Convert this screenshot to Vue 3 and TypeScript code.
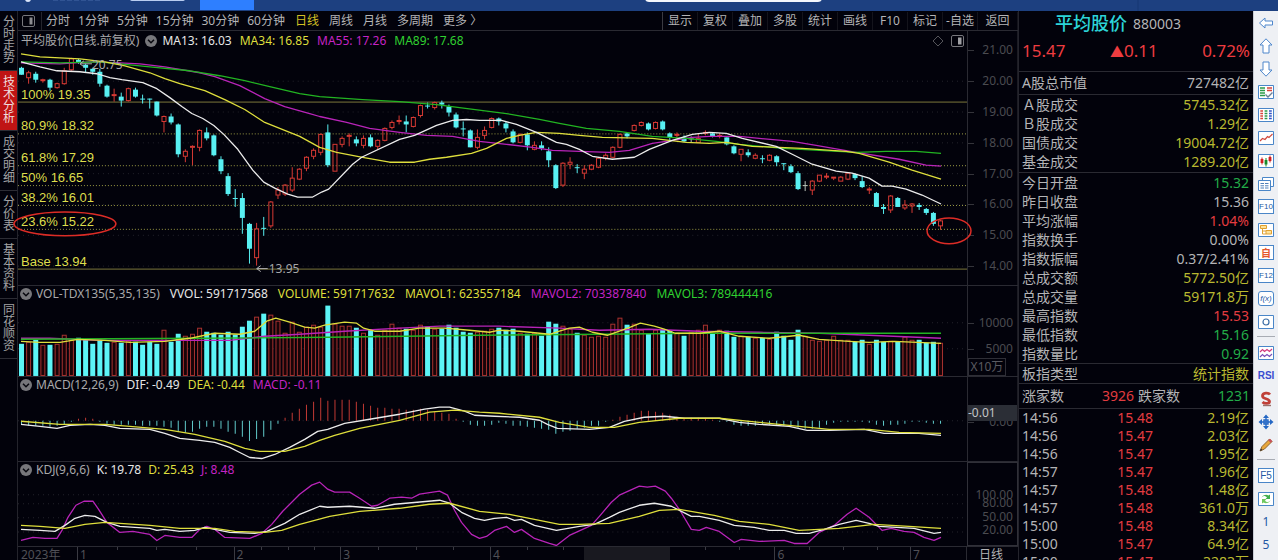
<script setup lang="ts">
type Candle = [kind: number, high: number, top: number, bottom: number, low: number]
interface Metric { text: string; tone: string }
interface Row { label: string; value: string; tone: string }
interface Shape { d: string; fill?: string; stroke?: string; width?: number }
interface Tool { name: string; shapes?: Shape[]; text?: string; boxed?: boolean; cls?: string; gap?: boolean }

const tabs = ['分时走势', '技术分析', '成交明细', '分价表', '基本资料', '同花顺资']
const activeTab = '技术分析'
const minutes = ['分时', '1分钟', '5分钟', '15分钟', '30分钟', '60分钟']
const periods = ['日线', '周线', '月线', '多周期', '更多 〉']
const actions = ['显示', '复权', '叠加', '多股', '统计', '画线', 'F10', '标记', '-自选', '返回']

/* Plot areas share one horizontal scale; each panel has its own vertical slice. */
const LEFT = 18
const WIDTH = 950
const STEP = 920 / 129
const barX = (i: number) => 21.5 + i * STEP
const pct = (value: number, start: number, size: number) => `${((value - start) / size) * 100}%`

/* kind: 0 falling, 1 rising, 2 unchanged */
const candles: Candle[] = [
  [0, 67, 68, 75, 75], [1, 71, 73, 78, 84], [0, 72, 74, 80, 83], [1, 79, 80, 81, 83], [0, 79, 80, 88, 91],
  [1, 83, 84, 88, 89], [1, 68, 71, 84, 85], [1, 58, 59, 70, 71], [0, 59, 60, 63, 64], [0, 64, 65, 68, 73],
  [0, 68, 69, 72, 75], [0, 69, 72, 84, 87], [0, 85, 86, 97, 98], [1, 89, 95, 96, 102], [0, 93, 97, 101, 107],
  [1, 88, 89, 101, 102], [0, 88, 90, 97, 98], [0, 95, 99, 100, 104], [0, 99, 99, 100, 109], [0, 102, 102, 116, 117],
  [1, 116, 117, 122, 133], [0, 114, 117, 123, 125], [0, 124, 125, 155, 158], [1, 150, 152, 157, 163], [1, 146, 147, 148, 166],
  [1, 130, 131, 148, 152], [0, 128, 133, 139, 141], [0, 135, 136, 156, 157], [0, 157, 160, 172, 175], [0, 174, 177, 195, 197],
  [0, 190, 199, 200, 208], [0, 194, 199, 219, 235], [0, 224, 225, 250, 265], [1, 224, 230, 259, 267], [0, 218, 229, 230, 237],
  [1, 202, 203, 227, 229], [1, 188, 191, 196, 200], [1, 185, 186, 195, 197], [1, 168, 179, 191, 193], [1, 169, 170, 180, 181],
  [1, 157, 158, 169, 172], [1, 149, 151, 157, 160], [1, 134, 135, 153, 156], [0, 125, 133, 166, 168], [1, 145, 145, 172, 172],
  [1, 137, 139, 145, 148], [1, 134, 136, 137, 147], [0, 137, 140, 144, 147], [1, 136, 139, 146, 149], [0, 135, 138, 147, 148],
  [1, 140, 141, 147, 150], [1, 128, 129, 141, 142], [1, 121, 123, 128, 130], [1, 116, 121, 122, 125], [0, 116, 122, 125, 133],
  [1, 117, 118, 127, 128], [1, 105, 106, 116, 118], [0, 103, 106, 107, 109], [1, 102, 103, 108, 110], [0, 101, 103, 105, 109],
  [0, 105, 107, 113, 117], [0, 113, 115, 128, 129], [0, 122, 129, 130, 137], [0, 130, 131, 148, 148], [1, 130, 138, 148, 150],
  [1, 127, 131, 136, 140], [1, 118, 119, 128, 129], [0, 118, 119, 122, 126], [0, 122, 124, 129, 133], [0, 130, 132, 143, 144],
  [1, 134, 135, 143, 144], [0, 133, 135, 146, 151], [1, 142, 146, 150, 151], [0, 142, 146, 149, 151], [0, 148, 152, 161, 168],
  [0, 165, 166, 189, 190], [1, 163, 164, 186, 188], [1, 158, 163, 165, 170], [0, 165, 168, 169, 174], [1, 166, 170, 174, 180],
  [1, 165, 166, 170, 171], [1, 158, 159, 168, 169], [1, 154, 156, 159, 161], [1, 147, 148, 158, 159], [1, 134, 135, 148, 149],
  [0, 133, 134, 137, 139], [1, 125, 126, 131, 132], [1, 122, 123, 126, 127], [0, 123, 124, 130, 131], [1, 122, 123, 129, 130],
  [0, 121, 122, 130, 131], [0, 133, 134, 138, 141], [1, 133, 135, 136, 139], [0, 136, 138, 142, 143], [2, 137, 139, 140, 143],
  [1, 134, 139, 143, 143], [1, 131, 133, 134, 136], [0, 133, 134, 137, 138], [1, 134, 136, 137, 139], [0, 138, 138, 145, 146],
  [0, 146, 147, 154, 155], [1, 150, 150, 155, 162], [0, 150, 153, 156, 158], [1, 154, 156, 159, 160], [0, 156, 159, 160, 164],
  [1, 155, 156, 161, 162], [0, 156, 157, 163, 167], [0, 164, 164, 165, 171], [0, 165, 167, 173, 174], [0, 172, 174, 190, 191],
  [2, 182, 186, 187, 192], [1, 181, 182, 191, 196], [1, 176, 176, 182, 183], [1, 174, 177, 178, 180], [1, 178, 178, 179, 181],
  [1, 177, 178, 182, 182], [1, 173, 174, 180, 181], [0, 174, 175, 179, 181], [0, 177, 182, 188, 189], [1, 188, 190, 191, 195],
  [0, 193, 194, 208, 208], [0, 205, 208, 210, 215], [1, 196, 197, 211, 214], [0, 198, 199, 208, 208], [1, 201, 206, 209, 211],
  [1, 204, 205, 207, 214], [0, 204, 206, 208, 211], [0, 209, 210, 214, 216], [0, 213, 214, 225, 227], [1, 221, 222, 227, 231],
]

const volumeTops = [
  345, 343, 341, 346, 346, 345, 336, 341, 339, 341, 345, 341, 344, 343, 344, 342, 343, 346, 343, 345,
  331, 343, 335, 337, 335, 329, 333, 334, 336, 333, 336, 328, 322, 318, 315, 316, 322, 334, 323, 333,
  328, 326, 328, 307, 325, 327, 327, 329, 334, 331, 336, 331, 325, 329, 330, 331, 326, 328, 330, 330,
  326, 329, 333, 334, 333, 332, 330, 329, 331, 330, 334, 335, 334, 337, 323, 325, 327, 330, 334, 336,
  338, 337, 338, 325, 319, 326, 325, 331, 335, 331, 331, 332, 334, 337, 333, 331, 326, 335, 331, 332,
  338, 337, 338, 339, 339, 340, 333, 337, 341, 331, 337, 341, 342, 341, 337, 341, 341, 343, 341, 345,
  341, 343, 342, 343, 338, 341, 341, 344, 343, 344,
]

const histogram = [
  -4, -5, -5, -5, -6, -5, -4, 0, 2, 3, 2, 0, -3, -4, -4, -4, -4, -5, -5, -5,
  -6, -7, -11, -12, -11, -8, -6, -6, -8, -11, -13, -16, -20, -18, -16, -9, -3, 3, 8, 12,
  16, 19, 23, 20, 21, 21, 21, 19, 17, 15, 13, 13, 12, 12, 11, 11, 12, 11, 9, 8,
  7, 2, 0, -4, -5, -5, -4, -2, -3, -5, -5, -6, -7, -8, -9, -13, -11, -10, -8, -7,
  -5, -5, -1, 1, 4, 6, 8, 10, 10, 9, 8, 6, 4, 3, 3, 3, 2, 1, 0, -1,
  -4, -5, -5, -5, -4, -4, -5, -5, -6, -7, -8, -8, -7, -4, -2, -1, 0, 0, -1, -2,
  -4, -5, -4, -4, -3, -1, -1, -2, -3, -3,
]

const priceLines = [
  { tone: 'violet', points: '21,63 60,64 90,62 120,63 140,64 165,67 200,73 215,77 240,86 265,99 285,107 310,114 320,117 347,123 370,129 400,133 427,136 453,137 480,142 507,145 533,148 553,151 580,152 610,153 630,151 653,144 680,140 693,138 710,137 740,137 760,139 793,142 817,146 857,153 900,160 927,166 942,167' },
  { tone: 'lime', points: '21,62 60,63 100,62 150,67 190,71 220,76 245,81 270,87 300,94 320,97 363,100 400,102 437,105 460,108 507,114 540,120 560,124 587,129 620,132 653,137 687,139 717,142 740,145 783,149 820,151 857,153 887,152 917,152 942,154' },
  { tone: 'gold', points: '21,54 40,57 60,58 80,59 105,62 125,66 150,73 165,79 180,84 205,91 225,100 245,110 265,123 285,131 300,137 320,148 337,153 363,158 390,163 415,163 430,160 447,158 472,154 487,149 507,139 520,136 537,133 560,134 580,136 603,138 653,139 687,143 710,144 727,143 753,147 780,148 803,149 847,152 860,154 890,163 913,171 942,180' },
  { tone: 'white', points: '21,62 40,67 57,71 80,72 97,74 110,78 122,80 143,83 157,89 170,98 182,107 192,114 203,119 214,126 224,135 238,150 253,171 264,183 275,189 288,195 298,198 313,198 322,193 329,190 353,165 362,158 400,140 415,136 437,126 453,121 467,120 480,121 502,121 517,125 537,133 557,143 567,145 580,150 593,157 613,160 635,158 650,150 673,141 693,135 710,133 727,134 743,139 777,147 793,155 813,165 837,172 853,174 870,179 883,187 893,187 907,190 923,196 942,205' },
]
const volumeLines = [
  { tone: 'violet', points: '21,339 50,339 100,341 180,341 230,341 265,337 300,335 345,332 400,329 440,327 500,327 560,329 600,331 650,330 700,332 760,333 820,334 870,336 942,339' },
  { tone: 'lime', points: '21,340 200,339 330,338 480,336 600,335 700,334 942,334' },
  { tone: 'gold', points: '21,342 40,343 60,343 78,340 105,341 130,343 165,342 190,339 205,336 215,334 240,335 255,332 267,322 276,319 290,323 305,328 315,329 325,326 345,323 357,324 364,329 375,332 400,332 420,329 445,329 470,331 490,333 500,331 520,332 550,335 560,332 570,329 580,328 593,333 608,336 620,332 631,328 641,324 655,327 665,330 676,334 700,334 720,332 740,337 770,339 800,336 820,340 850,342 870,343 895,342 942,344' },
]
const macdLines = [
  { tone: 'white', points: '21,425 40,427 57,429 70,426 90,425 105,426 120,429 150,430 165,434 180,439 200,441 215,443 230,448 240,453 250,458 262,459 275,455 290,448 305,440 318,432 328,430 345,424 370,420 400,415 425,410 440,408 450,408 465,412 475,416 495,417 520,418 540,421 548,425 558,429 590,430 610,428 625,422 645,418 665,417 685,419 720,419 740,423 760,425 790,427 808,431 830,431 865,430 885,434 920,434 942,436' },
  { tone: 'gold', points: '21,422 60,425 105,425 130,427 165,430 195,435 225,442 245,449 260,452 285,452 305,447 320,441 335,436 360,429 400,421 430,413 455,411 480,413 500,414 540,418 560,423 590,428 615,428 640,423 680,419 720,419 760,423 800,427 830,430 870,430 900,433 942,434' },
]
const kdjLines = [
  { tone: 'violet', points: '21,540 33,537 45,538 57,538 62,530 68,517 76,505 84,501 93,501 98,508 107,522 120,532 133,531 150,534 157,540 165,535 180,537 192,537 200,529 207,526 215,529 225,537 250,538 262,533 272,524 283,511 300,494 312,485 320,482 328,489 335,492 350,492 360,498 372,506 378,505 390,498 402,497 412,498 420,494 440,491 448,495 455,510 462,522 472,534 480,538 487,536 495,530 507,526 515,532 522,529 535,538 550,543 557,545 570,535 592,525 600,516 612,502 620,495 640,486 648,487 656,486 666,491 672,498 680,509 692,529 700,530 707,527 720,531 735,542 742,539 760,541 785,540 795,543 808,543 820,532 835,525 848,514 857,508 870,517 883,530 892,528 905,531 915,532 925,537 935,540 942,537' },
  { tone: 'white', points: '21,529 40,530 55,531 65,525 75,518 85,515 95,516 107,522 120,526 150,528 157,530 165,529 180,531 195,530 205,527 215,529 230,532 255,533 267,531 285,523 300,514 320,506 328,507 350,506 375,508 395,504 440,500 450,503 462,512 475,518 485,520 495,518 507,517 515,520 522,519 535,525 557,530 580,526 595,524 610,517 620,512 640,505 655,503 672,506 692,516 700,516 720,520 735,525 755,527 770,530 785,530 797,533 810,533 825,529 840,524 857,520 870,523 880,526 915,528 935,533 942,532' },
  { tone: 'gold', points: '21,525 40,526 65,528 85,524 105,522 120,523 150,525 180,528 215,528 235,531 265,532 282,530 300,524 330,516 360,511 400,508 430,504 450,503 480,511 510,514 540,520 560,524 580,524 610,523 640,516 660,510 680,509 715,515 740,521 770,524 800,530 840,528 875,524 910,526 942,528' },
]

const priceMetrics: Metric[] = [
  { text: 'MA13: 16.03', tone: 'white' }, { text: 'MA34: 16.85', tone: 'gold' },
  { text: 'MA55: 17.26', tone: 'violet' }, { text: 'MA89: 17.68', tone: 'lime' },
]
const volumeMetrics: Metric[] = [
  { text: 'VVOL: 591717568', tone: 'white' }, { text: 'VOLUME: 591717632', tone: 'gold' },
  { text: 'MAVOL1: 623557184', tone: 'gold' }, { text: 'MAVOL2: 703387840', tone: 'violet' },
  { text: 'MAVOL3: 789444416', tone: 'lime' },
]
const macdMetrics: Metric[] = [
  { text: 'DIF: -0.49', tone: 'white' }, { text: 'DEA: -0.44', tone: 'gold' }, { text: 'MACD: -0.11', tone: 'violet' },
]
const kdjMetrics: Metric[] = [
  { text: 'K: 19.78', tone: 'white' }, { text: 'D: 25.43', tone: 'gold' }, { text: 'J: 8.48', tone: 'violet' },
]

const levels = [
  { label: '100% 19.35', y: 102, solid: true }, { label: '80.9% 18.32', y: 134, solid: false },
  { label: '61.8% 17.29', y: 166, solid: false }, { label: '50% 16.65', y: 186, solid: false },
  { label: '38.2% 16.01', y: 206, solid: false }, { label: '23.6% 15.22', y: 230, solid: false },
  { label: 'Base 13.94', y: 270, solid: true },
]
const priceTicks = [21, 20, 19, 18, 17, 16, 15, 14]
const priceY = (p: number) => 50 + (21 - p) * 31
const volumeTicks = [{ label: '10000', y: 323 }, { label: '5000', y: 349 }]
const kdjTicks = [{ label: '100.00', y: 494 }, { label: '80.00', y: 503 }, { label: '50.00', y: 517 }, { label: '20.00', y: 531 }]
const months = [{ label: '1', x: 77 }, { label: '2', x: 234 }, { label: '3', x: 341 }, { label: '4', x: 491 }, { label: '6', x: 776 }, { label: '7', x: 912 }]
const minorTicks = [117, 156, 196, 262, 289, 315, 379, 417, 454, 528, 564, 706, 741, 811, 845, 879]

const turnover: Row[] = [
  { label: 'Ａ股成交', value: '5745.32亿', tone: 'amber' }, { label: 'Ｂ股成交', value: '1.29亿', tone: 'amber' },
  { label: '国债成交', value: '19004.72亿', tone: 'amber' }, { label: '基金成交', value: '1289.20亿', tone: 'amber' },
]
const stats: Row[] = [
  { label: '今日开盘', value: '15.32', tone: 'down' }, { label: '昨日收盘', value: '15.36', tone: 'plain' },
  { label: '平均涨幅', value: '1.04%', tone: 'up' }, { label: '指数换手', value: '0.00%', tone: 'plain' },
  { label: '指数振幅', value: '0.37/2.41%', tone: 'plain' }, { label: '总成交额', value: '5772.50亿', tone: 'amber' },
  { label: '总成交量', value: '59171.8万', tone: 'amber' }, { label: '最高指数', value: '15.53', tone: 'up' },
  { label: '最低指数', value: '15.16', tone: 'down' }, { label: '指数量比', value: '0.92', tone: 'down' },
]
const ticks = [
  ['14:56', '15.48', '2.19亿'], ['14:56', '15.47', '2.03亿'], ['14:56', '15.47', '1.95亿'],
  ['14:57', '15.47', '1.96亿'], ['14:57', '15.48', '1.48亿'], ['14:57', '15.48', '361.0万'],
  ['15:00', '15.48', '8.34亿'], ['15:00', '15.47', '64.9亿'], ['15:00', '15.47', '3283万'],
]

const FRAME: Shape = { d: 'M.5 1.5h15v13H.5z', fill: '#fff', stroke: '#4a86c8' }
const tools: Tool[] = [
  { name: '后退', shapes: [{ d: 'M1.5 8 7 3v3h7.500v4H7v3z', fill: '#fff', stroke: '#4f87cc' }] },
  { name: '上移', shapes: [{ d: 'M8 .8 14 7h-3v8H5V7H2z', fill: '#fff', stroke: '#4f87cc' }] },
  { name: '下移', shapes: [{ d: 'M8 15.200 14 9h-3V1H5v8H2z', fill: '#fff', stroke: '#4f87cc' }] },
  { name: '报价', shapes: [FRAME, { d: 'M2 4h5M2 6.500h5M2 9h5M2 11.500h5', stroke: '#2c9a4a', width: 1.5 }, { d: 'M9 4h5M9 6.500h5', stroke: '#d8453c', width: 1.5 }, { d: 'M7.500 10.500 10 13 14.500 8.500', fill: 'none', stroke: '#6c7f96', width: 1.4 }] },
  { name: '列表', shapes: [FRAME, { d: 'M2.300 4H5M2.300 6.500H5M2.300 9H5M2.300 11.500H5', stroke: '#d8453c', width: 1.5 }, { d: 'M6.600 4h2.800M6.600 6.500h2.800M6.600 9h2.800M6.600 11.500h2.800', stroke: '#2c9a4a', width: 1.5 }, { d: 'M11 4h2.800M11 6.500h2.800M11 9h2.800M11 11.500h2.800', stroke: '#3355c8', width: 1.5 }] },
  { name: '走势', shapes: [FRAME, { d: 'M2 11 4.500 8.500 7 9.500 9.500 6.500 11 7.500 14.500 4', fill: 'none', stroke: '#d2483c', width: 1.2 }] },
  { name: 'K线', shapes: [FRAME, { d: 'M4 4.500v7M12 2.500v7', stroke: '#d02020' }, { d: 'M2.600 6h2.800v4H2.600zM10.600 4h2.800v4h-2.800z', fill: '#d02020' }, { d: 'M8 5v8.500', stroke: '#188a28' }, { d: 'M6.600 7h2.800v4.500H6.600z', fill: '#188a28' }] },
  { name: '资讯', shapes: [{ d: 'M4.500 1.500h11v9h-11z', fill: '#fff', stroke: '#4a86c8' }, { d: 'M.5 4.500h12v10H.5z', fill: '#fff', stroke: '#4a86c8' }, { d: 'M2.500 7.500h3.500M7 7.500h3.500M2.500 9.800h3.500M7 9.800h3.500M2.500 12h3.500M7 12h3.500', stroke: '#4f7fb8' }] },
  { name: 'F10', text: 'F10', boxed: true },
  { name: '板块', shapes: [FRAME, { d: 'M2.500 3.500h6v3h-6zM8 8.500h5.500v3.500H8z', fill: '#fde29a', stroke: '#e0a030' }, { d: 'M4.500 6.500V12H8M4.500 9H8', fill: 'none', stroke: '#e0a030' }] },
  { name: '自选', text: '自', boxed: true, cls: 'orange' },
  { name: 'F12', text: 'F12', boxed: true },
  { name: '公式', text: 'f(x)', boxed: true, cls: 'formula' },
  { name: '圆', shapes: [FRAME, { d: 'M8 5a3 3 0 1 1 0 6a3 3 0 1 1 0-6z', fill: 'none', stroke: '#3c6ea6', width: 1.2 }] },
  { name: '叠加', gap: true, shapes: [FRAME, { d: 'M2 7 4.500 4.500 6.500 6.500 9 4.500 11.500 6.500 14 4', fill: 'none', stroke: '#d2387c', width: 1.2 }, { d: 'M2 12 4.500 9.500 6.500 11.500 9 9.500 11.500 11.500 14 9', fill: 'none', stroke: '#7a50b8', width: 1.2 }] },
  { name: 'RSI', text: 'RSI', cls: 'rsi' },
  { name: '资金', shapes: [{ d: 'M12 3.500C10.500 1.500 4.500 1.500 4.500 5c0 3.500 7 2 7 5.500 0 2.500-5 2.500-7 .5', fill: 'none', stroke: '#c04038', width: 2.800 }, { d: 'M5 14.500h8', stroke: '#99706c', width: 1.400 }] },
  { name: '移动', shapes: [{ d: 'M8 .5 11 4H5zM8 15.500 5 12h6zM.5 8 4 5v6zM15.500 8 12 11V5z', fill: '#2467c4' }, { d: 'M6 6h4v4H6zM8 4v8M4 8h8', fill: '#fff', stroke: '#2467c4', width: 1.4 }] },
  { name: '画笔', shapes: [{ d: 'M2 14 4 9.500 11.500 2 14 4.500 6.500 12z', fill: '#e8a63a', stroke: '#8d6430' }, { d: 'M11 2.500 13.500 5', stroke: '#c8505c', width: 2.400 }, { d: 'M2 14l1-2.500L4.500 13z', fill: '#333' }] },
  { name: 'F5', gap: true, text: 'F5', boxed: true, cls: 'wide' },
  { name: '刷新', shapes: [FRAME, { d: 'M3.500 7a4.500 3.500 0 0 1 7-2.500L12 3.500V8H7.500L9 6.500A3 3 0 0 0 3.500 7z', fill: '#3fae4c' }, { d: 'M12.500 9a4.500 3.500 0 0 1-7 2.500L4 12.500V8h4.500L7 9.500A3 3 0 0 0 12.500 9z', fill: '#6fc860' }] },
  { name: '1分钟', text: '1' },
  { name: '5分钟', text: '5' },
]
</script>

<template>
  <div class="app">
    <header class="topbar">
      <svg viewBox="0 0 1278 11" preserveAspectRatio="none" aria-hidden="true">
        <rect x="200" y="0" width="54" height="10" fill="#2e7fff" />
        <rect x="130" y="-4" width="55" height="5" rx="2" fill="#b9cdf0" />
        <circle cx="28" cy="-1" r="3" fill="#dbe6fa" />
        <path d="M53 0h48" stroke="#4769a8" stroke-dasharray="5 2" />
        <rect x="645" y="-6" width="177" height="8" rx="4" fill="#f4f7fc" />
        <path d="M1138 0v11" stroke="#173672" />
      </svg>
    </header>

    <div class="body">
      <nav class="tabs">
        <button v-for="t in tabs" :key="t" type="button" :class="{ active: t === activeTab }">{{ t }}</button>
      </nav>

      <main class="chart">
        <div class="toolbar">
          <button type="button" class="layout" aria-label="布局">
            <svg width="13" height="12" viewBox="0 0 13 12"><rect x=".5" y=".5" width="12" height="11" rx="1.500" fill="none" stroke="#77777c" /><path d="M7.500 2.500h3v7h-3z" fill="#8c8c90" /></svg>
          </button>
          <div class="group minutes"><button v-for="m in minutes" :key="m" type="button">{{ m }}</button></div>
          <div class="group periods"><button v-for="p in periods" :key="p" type="button" :class="{ current: p === '日线' }">{{ p }}</button></div>
          <div class="actions"><button v-for="a in actions" :key="a" type="button">{{ a }}</button></div>
        </div>

        <section class="panel price">
          <div class="plot">
            <svg class="canvas" viewBox="18 31 950 255" preserveAspectRatio="none">
              <line v-for="p in priceTicks.slice(1)" :key="p" class="grid" x1="18" x2="968" :y1="priceY(p) + 0.5" :y2="priceY(p) + 0.5" />
              <line v-for="l in levels" :key="l.label" :class="['level', { solid: l.solid }]" x1="18" x2="968" :y1="l.y + 0.5" :y2="l.y + 0.5" />
              <g v-for="(c, i) in candles" :key="i" :class="['candle', ['fall', 'rise', 'flat'][c[0]]]">
                <template v-if="c[0] === 1">
                  <path :d="`M${barX(i)} ${c[1]}V${c[2]}M${barX(i)} ${c[3]}V${c[4]}`" />
                  <rect :x="barX(i) - 2" :y="c[2]" width="4" :height="c[3] - c[2]" />
                </template>
                <template v-else>
                  <path :d="`M${barX(i)} ${c[1]}V${c[4]}`" />
                  <rect :x="barX(i) - 2.5" :y="c[2]" width="5" :height="c[3] - c[2]" />
                </template>
              </g>
              <polyline v-for="l in priceLines" :key="l.tone" :class="['curve', l.tone]" :points="l.points" />
              <path class="pointer" d="M80 64h12M80 64l4-3M80 64l4 3M257 270h11M257 270l4-3M257 270l4 3" />
            </svg>
            <div class="head tall">
              <span class="name">平均股价(日线.前复权)</span>
              <button type="button" class="fold" aria-label="展开"><svg width="12" height="12" viewBox="0 0 12 12"><circle cx="6" cy="6" r="6" fill="#77777b" /><path d="M3 4.800 6 7.800 9 4.800" fill="none" stroke="#08080f" stroke-width="1.500" /></svg></button>
              <span v-for="m in priceMetrics" :key="m.text" :class="m.tone">{{ m.text }}</span>
              <span class="corner">
                <svg width="12" height="12" viewBox="0 0 12 12"><path d="M6 1 11 6 6 11 1 6z" fill="none" stroke="#55555a" /></svg>
                <svg width="13" height="12" viewBox="0 0 13 12"><rect x=".5" y=".5" width="12" height="11" rx="1.500" fill="none" stroke="#77777c" /><path d="M7 2.500h3.500v7H7z" fill="#a0a0a4" /></svg>
              </span>
            </div>
            <span v-for="l in levels" :key="l.label" class="level-label" :style="{ top: pct(l.y - 7, 31, 255) }">{{ l.label }}</span>
            <span class="extreme" :style="{ left: pct(92, LEFT, WIDTH), top: pct(65, 31, 255) }">20.75</span>
            <span class="extreme" :style="{ left: pct(269, LEFT, WIDTH), top: pct(270, 31, 255) }">13.95</span>
            <svg class="canvas marks" viewBox="18 31 950 255" preserveAspectRatio="none">
              <ellipse cx="65" cy="225" rx="51" ry="12" /><ellipse cx="950" cy="232" rx="22" ry="13" />
            </svg>
          </div>
          <div class="axis">
            <span v-for="p in priceTicks" :key="p" class="tick" :style="{ top: pct(priceY(p) + 0.5, 31, 255) }">{{ p.toFixed(2) }}</span>
          </div>
        </section>

        <section class="panel volume">
          <div class="plot">
            <svg class="canvas" viewBox="18 286 950 91" preserveAspectRatio="none">
              <line v-for="t in volumeTicks" :key="t.y" class="grid" x1="18" x2="968" :y1="t.y + 0.5" :y2="t.y + 0.5" />
              <g v-for="(v, i) in volumeTops" :key="i">
                <rect v-if="candles[i][0] === 0" class="vol-fall" :x="barX(i) - 2.5" :y="v - 0.5" width="5" :height="377 - v" />
                <rect v-else class="vol-rise" :x="barX(i) - 2" :y="v" width="4" :height="376 - v" />
              </g>
              <polyline v-for="l in volumeLines" :key="l.tone" :class="['curve', l.tone]" :points="l.points" />
            </svg>
            <div class="head">
              <button type="button" class="fold" aria-label="展开"><svg width="12" height="12" viewBox="0 0 12 12"><circle cx="6" cy="6" r="6" fill="#77777b" /><path d="M3 4.800 6 7.800 9 4.800" fill="none" stroke="#08080f" stroke-width="1.500" /></svg></button>
              <span class="name">VOL-TDX135(5,35,135)</span>
              <span v-for="m in volumeMetrics" :key="m.text" :class="m.tone">{{ m.text }}</span>
            </div>
          </div>
          <div class="axis">
            <span v-for="t in volumeTicks" :key="t.y" class="tick" :style="{ top: pct(t.y + 0.5, 286, 91) }">{{ t.label }}</span>
            <span class="unit">X10万</span>
          </div>
        </section>

        <section class="panel macd">
          <div class="plot">
            <svg class="canvas" viewBox="18 377 950 84" preserveAspectRatio="none">
              <line class="grid" x1="18" x2="968" y1="421.5" y2="421.5" />
              <path v-for="(h, i) in histogram" :key="i" :class="h > 0 ? 'hist-up' : 'hist-down'" :d="`M${barX(i)} 421.5v${h === 0 ? 1 : -h}`" />
              <polyline v-for="l in macdLines" :key="l.tone" :class="['curve', l.tone]" :points="l.points" />
            </svg>
            <div class="head">
              <button type="button" class="fold" aria-label="展开"><svg width="12" height="12" viewBox="0 0 12 12"><circle cx="6" cy="6" r="6" fill="#77777b" /><path d="M3 4.800 6 7.800 9 4.800" fill="none" stroke="#08080f" stroke-width="1.500" /></svg></button>
              <span class="name">MACD(12,26,9)</span>
              <span v-for="m in macdMetrics" :key="m.text" :class="m.tone">{{ m.text }}</span>
            </div>
          </div>
          <div class="axis">
            <span class="tick" :style="{ top: pct(422, 377, 84) }">0.00</span>
            <span class="badge" :style="{ top: pct(413, 377, 84) }">-0.01</span>
          </div>
        </section>

        <section class="panel kdj">
          <div class="plot">
            <svg class="canvas" viewBox="18 461 950 85" preserveAspectRatio="none">
              <line v-for="t in kdjTicks" :key="t.y" class="grid" x1="18" x2="968" :y1="t.y + 0.5" :y2="t.y + 0.5" />
              <polyline v-for="l in kdjLines" :key="l.tone" :class="['curve', l.tone]" :points="l.points" />
            </svg>
            <div class="head">
              <button type="button" class="fold" aria-label="展开"><svg width="12" height="12" viewBox="0 0 12 12"><circle cx="6" cy="6" r="6" fill="#77777b" /><path d="M3 4.800 6 7.800 9 4.800" fill="none" stroke="#08080f" stroke-width="1.500" /></svg></button>
              <span class="name">KDJ(9,6,6)</span>
              <span v-for="m in kdjMetrics" :key="m.text" :class="m.tone">{{ m.text }}</span>
            </div>
          </div>
          <div class="axis framed">
            <span v-for="t in kdjTicks" :key="t.y" class="tick bare" :style="{ top: pct(t.y, 461, 85) }">{{ t.label }}</span>
          </div>
        </section>

        <footer class="dates">
          <div class="timeline">
            <span class="year">2023年</span>
            <span v-for="m in months" :key="m.label" class="month" :style="{ left: pct(m.x, LEFT, WIDTH) }">{{ m.label }}</span>
            <i v-for="x in minorTicks" :key="x" class="minor" :style="{ left: pct(x, LEFT, WIDTH) }"></i>
            <i class="handle" :style="{ left: pct(585, LEFT, WIDTH), width: pct(86, 0, WIDTH) }"></i>
          </div>
          <span class="mode">日线</span>
        </footer>
      </main>

      <aside class="quote">
        <h1><span class="title">平均股价</span><span class="code">880003</span></h1>
        <div class="last"><span>15.47</span><span><i class="arrow">▲</i>0.11</span><span>0.72%</span></div>
        <table class="cap"><tbody><tr><th scope="row">A股总市值</th><td>727482亿</td></tr></tbody></table>
        <table class="turnover"><tbody><tr v-for="r in turnover" :key="r.label"><th scope="row">{{ r.label }}</th><td :class="r.tone">{{ r.value }}</td></tr></tbody></table>
        <table class="stats"><tbody><tr v-for="r in stats" :key="r.label"><th scope="row">{{ r.label }}</th><td :class="r.tone">{{ r.value }}</td></tr></tbody></table>
        <table class="kind"><tbody><tr><th scope="row">板指类型</th><td class="amber">统计指数</td></tr></tbody></table>
        <div class="breadth"><span>涨家数</span><span class="up">3926</span><span>跌家数</span><span class="down">1231</span></div>
        <table class="ticks"><tbody><tr v-for="(t, i) in ticks" :key="i"><td>{{ t[0] }}</td><td class="up">{{ t[1] }}</td><td class="amber">{{ t[2] }}</td></tr></tbody></table>
      </aside>

      <nav class="rail">
        <template v-for="t in tools" :key="t.name">
          <hr v-if="t.gap">
          <button type="button" :aria-label="t.name">
            <svg v-if="t.shapes" width="16" height="16" viewBox="0 0 16 16">
              <path v-for="(s, i) in t.shapes" :key="i" :d="s.d" :fill="s.fill ?? 'none'" :stroke="s.stroke ?? 'none'" :stroke-width="s.width ?? 1" />
            </svg>
            <span v-else :class="[{ boxed: t.boxed }, t.cls]">{{ t.text }}</span>
          </button>
        </template>
      </nav>
    </div>
  </div>
</template>

<style>
body { margin: 0; background: #02020b; }
</style>

<style scoped>
.app { display: flex; flex-direction: column; height: 100vh; min-height: 480px; overflow: hidden; background: #02020b; color: #b4b4b6; font: 12px/16px "Noto Sans", "Noto Sans CJK SC", sans-serif; }
.app * { box-sizing: border-box; }
button { margin: 0; padding: 0; border: 0; background: none; color: inherit; font: inherit; white-space: nowrap; cursor: pointer; }
.topbar { flex: 0 0 11px; background: #1d4080; }
.topbar svg { display: block; width: 100%; height: 11px; }
.body { flex: 1; min-height: 0; display: grid; grid-template-columns: 18px minmax(0, 1fr) 235px 25px; grid-template-rows: minmax(0, 1fr); }

.tabs { display: flex; flex-direction: column; border-right: 1px solid #24242c; }
.tabs button { width: 17px; padding: 5px 2px 6px 3px; border-bottom: 1px solid #2c2c34; color: #a2a2a4; line-height: 12px; white-space: normal; word-break: break-all; }
.tabs .active { background: #c01414; color: #f0dede; }

.chart { display: flex; flex-direction: column; min-width: 0; min-height: 0; }
.toolbar { flex: 0 0 20px; display: flex; align-items: stretch; padding-top: 1px; border-bottom: 1px solid #2a2a32; overflow: hidden; }
.layout { width: 24px; padding-left: 4px; border-right: 1px solid #24242c; display: flex; align-items: center; }
.group { display: flex; }
.minutes { gap: 8px; padding-left: 4px; }
.periods { gap: 10px; padding-left: 10px; }
.current { color: #d2c024; }
.actions { margin-left: auto; display: flex; border-left: 1px solid #3a3a42; }
.actions button { width: 35px; border-right: 1px solid #14141c; }
.actions button:last-child { width: 40px; }

.panel { display: grid; grid-template-columns: minmax(0, 1fr) 51px; min-height: 0; }
.price { flex: 255 1 0; }
.volume { flex: 91 1 0; }
.macd { flex: 84 1 0; }
.kdj { flex: 85 1 0; }
.volume, .macd, .kdj { border-top: 1px solid #2a2a32; }
.plot { position: relative; min-height: 0; }
.canvas { position: absolute; inset: 0; width: 100%; height: 100%; }
.volume .canvas, .macd .canvas, .kdj .canvas { top: -1px; height: calc(100% + 1px); }
.marks { z-index: 3; overflow: visible; pointer-events: none; }
.marks ellipse { fill: none; stroke: #dc2c26; stroke-width: 1.5; }
.head { position: relative; display: flex; align-items: center; gap: 8px; height: 16px; padding-left: 2px; white-space: nowrap; }
.volume .head { gap: 10px; }
.kdj .head { gap: 7px; }
.head .fold + .name { margin-left: -4px; }
.volume .fold + .name { margin-left: -6px; }
.kdj .fold + .name { margin-left: -3px; }
.tall { height: 19px; padding-left: 3px; }
.tall .fold { margin: 0 -3px 0 -2px; }
.fold { display: flex; }
.corner { margin-left: auto; display: flex; gap: 7px; padding-right: 3px; }
.axis { position: relative; border-left: 1px solid #2a2a32; border-right: 1px solid #1c1c24; }
.tick { position: absolute; right: 4px; transform: translateY(-50%); color: #4b4b50; }
.tick:not(.bare)::before { content: ""; position: absolute; right: 39px; top: 8px; width: 6px; border-top: 1px solid #34343a; }
.framed { border: 1px solid #303038; }
.unit { position: absolute; left: 0; bottom: 0; width: 38px; border: 1px solid #2e2e36; color: #5a5a60; text-align: center; }
.badge { position: absolute; left: 0; right: 0; transform: translateY(-50%); background: #2b2e36; color: #c4c4c6; }

.grid { stroke: #24242c; stroke-dasharray: 1 4; }
.level { stroke: #9c9c44; stroke-dasharray: 1 2; }
.level.solid { stroke: #7c783c; stroke-dasharray: none; }
.candle { stroke: #58f0f2; fill: #58f0f2; }
.candle rect { stroke: none; }
.rise, .rise rect { stroke: #d83a34; fill: none; }
.flat { stroke: #b8c0b8; fill: #b8c0b8; }
.vol-fall { fill: #5cf4f6; }
.vol-rise { fill: #180408; stroke: #a83230; }
.hist-up { stroke: #c23a34; }
.hist-down { stroke: #62cccc; }
.curve { fill: none; stroke-width: 1.3; stroke-linejoin: round; }
.pointer { fill: none; stroke: #b0b0b2; }
.curve.white { stroke: #ececec; }
.curve.gold { stroke: #dede3c; }
.curve.violet { stroke: #b824b8; }
.curve.lime { stroke: #22b422; }
.name { color: #a8a8aa; }
span.white { color: #e6e6e6; }
span.gold { color: #dede3c; }
span.violet { color: #c424c4; }
span.lime { color: #30d030; }
.level-label { position: absolute; left: 3px; transform: translateY(-50%); color: #dede4c; font: 13px/14px "Liberation Sans", sans-serif; white-space: nowrap; }
.extreme { position: absolute; transform: translateY(-50%); color: #a6a6a8; }

.dates { flex: 0 0 14px; min-height: 0; overflow: hidden; display: grid; grid-template-columns: minmax(0, 1fr) 51px; grid-template-rows: 13px; color: #505056; border-top: 1px solid #2a2a32; }
.timeline { position: relative; overflow: hidden; border-right: 1px solid #2a2a32; }
.year { display: block; padding-left: 3px; line-height: 15px; }
.month { position: absolute; top: 0; height: 14px; padding-left: 2px; border-left: 1px solid #3a3a42; line-height: 15px; }
.minor { position: absolute; top: 0; width: 1px; height: 3px; background: #3a3a42; }
.handle { position: absolute; top: 0; height: 14px; background: #191920; }
.mode { padding-left: 12px; color: #b4b4b6; line-height: 15px; }

.quote { border-left: 1px solid #24242c; overflow: hidden; font-size: 14px; line-height: 19px; min-height: 0; }
.quote h1 { display: flex; align-items: center; gap: 6px; height: 25px; margin: 0; padding-left: 36px; font-size: 14px; font-weight: 400; }
.title { color: #2cd4d8; font-size: 18px; font-weight: 500; }
.last { display: flex; justify-content: space-between; align-items: center; height: 35px; padding: 0 3px 6px; color: #ee3c40; font-size: 17px; }
.arrow { font-size: 14px; font-style: normal; }
.quote table { width: 100%; border-collapse: collapse; border-top: 1px solid #2a2a32; table-layout: fixed; display: table; }
.quote th, .quote td { padding: 0 4px 0 3px; height: 19px; font-weight: 400; text-align: left; white-space: nowrap; }
.quote td:last-child { text-align: right; }
.quote th { width: 90px; }
.quote .cap th, .quote .cap td { height: 22px; }
.quote .turnover { margin-bottom: 1px; }
.breadth { display: grid; grid-template-columns: 42px 70px 46px 1fr; height: 25px; padding: 0 3px; align-items: center; border-top: 1px solid #2a2a32; }
.breadth span:nth-child(even) { text-align: right; }
.breadth span:nth-child(3) { padding-left: 4px; white-space: nowrap; }
.ticks td:first-child { width: 60px; }
.quote .ticks td { height: 18px; line-height: 18px; }
.quote .ticks td:nth-child(2) { width: 78px; text-align: right; }
.amber { color: #b8b830; }
.up { color: #e23c40; }
.down { color: #22ac48; }

.rail { display: flex; flex-direction: column; background: #eef0f4; border-left: 1px solid #c8ccd4; overflow: hidden; color: #2458a4; font-size: 12px; }
.rail button { flex: 0 0 23px; display: flex; align-items: center; justify-content: center; }
.rail hr { flex: none; width: 18px; margin: 3px auto 4px; border: 0; border-top: 1px solid #a8acb4; }
.boxed { width: 16px; height: 15px; border: 1px solid #4a86c8; background: #fff; font: 8px/13px "Liberation Sans", sans-serif; text-align: center; }
.wide { font-size: 10px; }
.orange { color: #e4572e; font: 700 10px/13px "Noto Sans CJK SC", sans-serif; }
.formula { border-radius: 3px; font-style: italic; }
.rsi { color: #3a4cd0; font: 700 10px/14px "Liberation Sans", sans-serif; }
</style>
